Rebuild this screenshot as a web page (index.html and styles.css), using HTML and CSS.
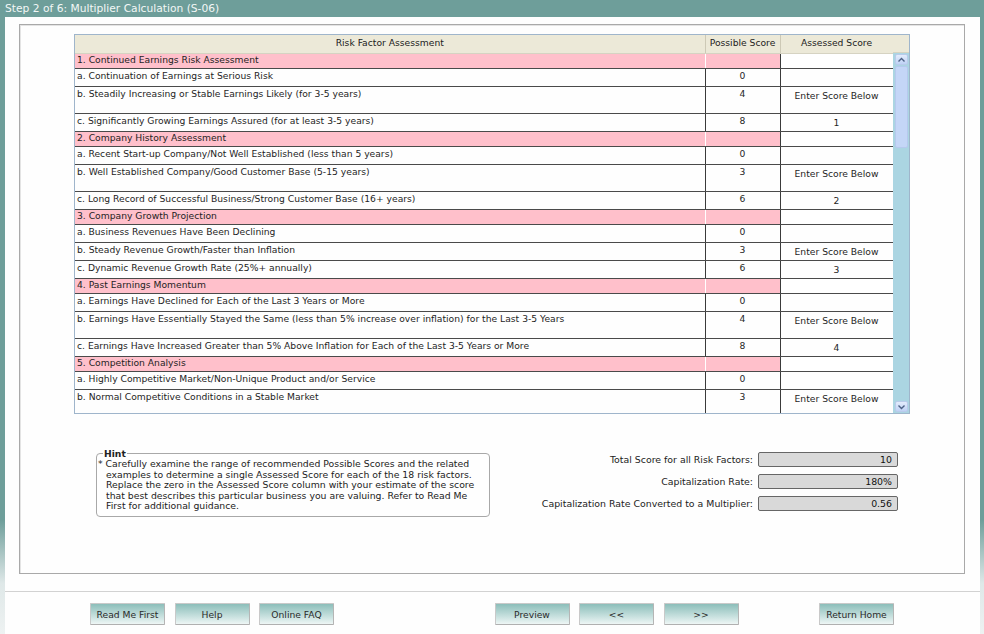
FILE: index.html
```html
<!DOCTYPE html>
<html>
<head>
<meta charset="utf-8">
<link rel="stylesheet" href="styles.css">
</head>
<body>
<div class="titlebar">Step 2 of 6: Multiplier Calculation (S-06)</div>
<div class="panel">
  <div class="frame">
    <div class="gridwrap">
      <div class="tableclip">
        <table class="risk">
          <colgroup><col class="c-label"><col class="c-pos"><col class="c-ass"></colgroup>
          <thead>
            <tr><th>Risk Factor Assessment</th><th>Possible Score</th><th>Assessed Score</th></tr>
          </thead>
          <tbody>
            <tr class="grp"><td class="lbl">1. Continued Earnings Risk Assessment</td><td class="pos"></td><td class="ass"></td></tr>
            <tr class="short"><td class="lbl">a. Continuation of Earnings at Serious Risk</td><td class="pos">0</td><td class="ass"></td></tr>
            <tr class="tall"><td class="lbl">b. Steadily Increasing or Stable Earnings Likely (for 3-5 years)</td><td class="pos">4</td><td class="ass">Enter Score Below</td></tr>
            <tr class="short"><td class="lbl">c. Significantly Growing Earnings Assured (for at least 3-5 years)</td><td class="pos">8</td><td class="ass">1</td></tr>

            <tr class="grp"><td class="lbl">2. Company History Assessment</td><td class="pos"></td><td class="ass"></td></tr>
            <tr class="short"><td class="lbl">a. Recent Start-up Company/Not Well Established (less than 5 years)</td><td class="pos">0</td><td class="ass"></td></tr>
            <tr class="tall"><td class="lbl">b. Well Established Company/Good Customer Base (5-15 years)</td><td class="pos">3</td><td class="ass">Enter Score Below</td></tr>
            <tr class="short"><td class="lbl">c. Long Record of Successful Business/Strong Customer Base (16+ years)</td><td class="pos">6</td><td class="ass">2</td></tr>

            <tr class="grp"><td class="lbl">3. Company Growth Projection</td><td class="pos"></td><td class="ass"></td></tr>
            <tr class="short"><td class="lbl">a. Business Revenues Have Been Declining</td><td class="pos">0</td><td class="ass"></td></tr>
            <tr class="short"><td class="lbl">b. Steady Revenue Growth/Faster than Inflation</td><td class="pos">3</td><td class="ass">Enter Score Below</td></tr>
            <tr class="short"><td class="lbl">c. Dynamic Revenue Growth Rate (25%+ annually)</td><td class="pos">6</td><td class="ass">3</td></tr>

            <tr class="grp"><td class="lbl">4. Past Earnings Momentum</td><td class="pos"></td><td class="ass"></td></tr>
            <tr class="short"><td class="lbl">a. Earnings Have Declined for Each of the Last 3 Years or More</td><td class="pos">0</td><td class="ass"></td></tr>
            <tr class="tall"><td class="lbl">b. Earnings Have Essentially Stayed the Same (less than 5% increase over inflation) for the Last 3-5 Years</td><td class="pos">4</td><td class="ass">Enter Score Below</td></tr>
            <tr class="short"><td class="lbl">c. Earnings Have Increased Greater than 5% Above Inflation for Each of the Last 3-5 Years or More</td><td class="pos">8</td><td class="ass">4</td></tr>

            <tr class="grp"><td class="lbl">5. Competition Analysis</td><td class="pos"></td><td class="ass"></td></tr>
            <tr class="short"><td class="lbl">a. Highly Competitive Market/Non-Unique Product and/or Service</td><td class="pos">0</td><td class="ass"></td></tr>
            <tr class="tall"><td class="lbl">b. Normal Competitive Conditions in a Stable Market</td><td class="pos">3</td><td class="ass">Enter Score Below</td></tr>
          </tbody>
        </table>
      </div>
      <div class="scrollbar">
        <div class="sb-head"></div>
        <div class="sb-track">
          <div class="sb-btn"><svg width="9" height="6" viewBox="0 0 9 6"><path d="M1.5 4.5 L4.5 1.5 L7.5 4.5" fill="none" stroke="#4d6185" stroke-width="1.4"/></svg></div>
          <div class="sb-thumb"></div>
          <div class="sb-fill"></div>
          <div class="sb-btn"><svg width="9" height="6" viewBox="0 0 9 6"><path d="M1.5 1.5 L4.5 4.5 L7.5 1.5" fill="none" stroke="#4d6185" stroke-width="1.4"/></svg></div>
        </div>
      </div>
    </div>
    <div class="lower">
      <fieldset class="hint">
        <legend>Hint</legend>
        <p>* Carefully examine the range of recommended Possible Scores and the related examples to determine a single Assessed Score for each of the 18 risk factors. Replace the zero in the Assessed Score column with your estimate of the score that best describes this particular business you are valuing. Refer to Read Me First for additional guidance.</p>
      </fieldset>
      <div class="totals">
        <span class="t-label">Total Score for all Risk Factors:</span><span class="t-box">10</span>
        <span class="t-label">Capitalization Rate:</span><span class="t-box">180%</span>
        <span class="t-label">Capitalization Rate Converted to a Multiplier:</span><span class="t-box">0.56</span>
      </div>
    </div>
  </div>
  <div class="sep"></div>
  <div class="buttons">
    <button class="btn">Read Me First</button>
    <button class="btn">Help</button>
    <button class="btn">Online FAQ</button>
    <button class="btn gap-big">Preview</button>
    <button class="btn">&lt;&lt;</button>
    <button class="btn">&gt;&gt;</button>
    <button class="btn gap-mid">Return Home</button>
  </div>
</div>
</body>
</html>
```
FILE: styles.css
```css
html, body {
  margin: 0;
  height: 634px;
  overflow: hidden;
}
body {
  background: linear-gradient(to bottom, #6e9e9a 0, #6e9e9a 82%, #dfe8e8 92%, #eef2f2 100%);
  font-family: "DejaVu Sans", sans-serif;
  color: #1e1e1e;
}
.titlebar {
  height: 17px;
  line-height: 17px;
  padding-left: 5px;
  color: #f2f7f6;
  font-size: 10.7px;
  background: #6e9e9a;
}
.panel {
  margin: 0 4px 0 5px;
  height: 617px;
  box-sizing: border-box;
  background: #fefefe;
  padding: 7px 15px 0 14px;
  display: flex;
  flex-direction: column;
}
.frame {
  height: 550px;
  box-sizing: border-box;
  border: 1px solid #a9a9a9;
  box-shadow: inset 1px 1px 0 #e4e4e4;
  padding: 9px 0 0 54px;
  display: flex;
  flex-direction: column;
}
.gridwrap {
  display: flex;
  width: 836px;
  height: 380px;
  box-sizing: border-box;
  border: 1px solid #9fb5cb;
}
.tableclip {
  width: 818px;
  height: 378px;
  overflow: hidden;
}
.risk {
  border-collapse: collapse;
  table-layout: fixed;
  width: 818px;
  font-size: 9.2px;
  line-height: 11px;
}
.c-label { width: 630px; }
.c-pos { width: 75px; }
.c-ass { width: 113px; }
.risk th {
  box-sizing: border-box;
  height: 18px;
  padding: 0 0 2px 0;
  font-weight: normal;
  background: #ece9d8;
  color: #222;
  border-right: 1px solid #cdc9b6;
  border-bottom: 1px solid #d6d3c2;
  text-align: center;
  vertical-align: middle;
}
.risk td {
  box-sizing: border-box;
  padding: 1px 0 0 2px;
  vertical-align: top;
  border-top: 1px solid #4a4a4a;
  border-bottom: 1px solid #4a4a4a;
  border-left: 1px solid #3a3a3a;
  border-right: 1px solid #3a3a3a;
  white-space: nowrap;
  overflow: hidden;
}
.risk td.lbl { border-left: none; }
.risk td.pos { text-align: center; padding-left: 0; }
.risk td.ass {
  text-align: center;
  padding: 3px 0 0 0;
  border-right: 1px solid #9a9a9a;
}
.risk tr.grp td { height: 15px; padding-top: 0; }
.risk tr.grp td.lbl,
.risk tr.grp td.pos { background: #ffc0cb; }
.risk tr.grp td.lbl { border-right: 1px solid #fff; }
.risk tr.grp td.pos { border-left: 1px solid #fff; border-right: 1px solid #3a3a3a; }
.risk tr.grp td.ass { background: #fff; padding-top: 0; }
.risk tr.short td { height: 18px; }
.risk tr.tall td { height: 27px; }

.scrollbar {
  width: 16px;
  display: flex;
  flex-direction: column;
}
.sb-head {
  height: 18px;
  background: #ece9d8;
  border-bottom: 1px solid #d6d3c2;
  box-sizing: border-box;
}
.sb-track {
  flex: 1;
  background: #abd5e2;
  display: flex;
  flex-direction: column;
  align-items: center;
  padding: 1px 0 1px;
}
.sb-btn {
  width: 13px;
  height: 11px;
  box-sizing: border-box;
  border: 1px solid #b9cbeb;
  border-radius: 2px;
  background: linear-gradient(#e3ecfc, #bfd2f5);
  display: flex;
  align-items: center;
  justify-content: center;
}
.sb-thumb {
  width: 13px;
  height: 82px;
  margin-top: 1px;
  box-sizing: border-box;
  border: 1px solid #b6c9ee;
  border-radius: 2px;
  background: #c4d6f7;
}
.sb-fill { flex: 1; }

.lower {
  display: flex;
  align-items: flex-start;
  margin-top: 38px;
}
.hint {
  box-sizing: border-box;
  width: 394px;
  height: 69px;
  margin: -4px 0 0 22px;
  padding: 0 12px 0 9px;
  border: 1px solid #a8a8a8;
  border-radius: 4px;
  min-width: 0;
}
.hint legend {
  font-size: 9.2px;
  font-weight: bold;
  padding: 0 1px;
  margin-left: -3px;
  color: #222;
}
.hint p {
  margin: 0;
  font-size: 9.3px;
  line-height: 10.5px;
  text-indent: -8px;
  color: #222;
}
.totals {
  margin-left: auto;
  margin-right: 66px;
  display: grid;
  grid-template-columns: auto 140px;
  column-gap: 5px;
  row-gap: 7px;
  align-items: center;
  font-size: 9.4px;
}
.t-label {
  text-align: right;
  color: #222;
}
.t-box {
  height: 15px;
  box-sizing: border-box;
  border: 1px solid #666;
  border-radius: 2px;
  background: #d9d9d9;
  text-align: right;
  padding-right: 5px;
  line-height: 13px;
  color: #111;
}
.sep {
  height: 1px;
  background: #d2d2d2;
  margin: 17px -15px 0 -14px;
}
.buttons {
  display: flex;
  gap: 9.5px;
  margin-top: 11px;
  padding-left: 71px;
}
.btn {
  width: 75px;
  height: 22px;
  margin: 0;
  padding: 0;
  box-sizing: border-box;
  border: 1px solid #c9c9c9;
  border-right-color: #b5b5b5;
  border-bottom-color: #b0b0b0;
  border-radius: 1px;
  background: linear-gradient(#8cbeba, #cfe5e3 70%, #eef6f5);
  font-family: "DejaVu Sans", sans-serif;
  font-size: 9.2px;
  color: #2a2a2a;
}
.gap-big { margin-left: 151px; }
.gap-mid { margin-left: 71px; }
```
